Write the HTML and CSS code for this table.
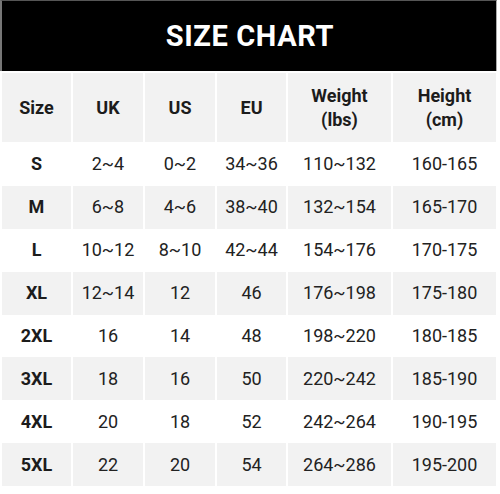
FILE: index.html
```html
<!DOCTYPE html>
<html lang="en">
<head>
<meta charset="utf-8">
<title>Size Chart</title>
<link rel="stylesheet" href="styles.css">
</head>
<body>
<div class="page">
  <header class="banner"><h1>SIZE CHART</h1></header>
  <div class="chart">
    <div class="row head">
      <div class="cell">Size</div>
      <div class="cell">UK</div>
      <div class="cell">US</div>
      <div class="cell">EU</div>
      <div class="cell">Weight<br>(lbs)</div>
      <div class="cell">Height<br>(cm)</div>
    </div>
    <div class="row">
      <div class="cell size">S</div><div class="cell">2~4</div><div class="cell">0~2</div><div class="cell">34~36</div><div class="cell">110~132</div><div class="cell">160-165</div>
    </div>
    <div class="row alt">
      <div class="cell size">M</div><div class="cell">6~8</div><div class="cell">4~6</div><div class="cell">38~40</div><div class="cell">132~154</div><div class="cell">165-170</div>
    </div>
    <div class="row">
      <div class="cell size">L</div><div class="cell">10~12</div><div class="cell">8~10</div><div class="cell">42~44</div><div class="cell">154~176</div><div class="cell">170-175</div>
    </div>
    <div class="row alt">
      <div class="cell size">XL</div><div class="cell">12~14</div><div class="cell">12</div><div class="cell">46</div><div class="cell">176~198</div><div class="cell">175-180</div>
    </div>
    <div class="row">
      <div class="cell size">2XL</div><div class="cell">16</div><div class="cell">14</div><div class="cell">48</div><div class="cell">198~220</div><div class="cell">180-185</div>
    </div>
    <div class="row alt">
      <div class="cell size">3XL</div><div class="cell">18</div><div class="cell">16</div><div class="cell">50</div><div class="cell">220~242</div><div class="cell">185-190</div>
    </div>
    <div class="row">
      <div class="cell size">4XL</div><div class="cell">20</div><div class="cell">18</div><div class="cell">52</div><div class="cell">242~264</div><div class="cell">190-195</div>
    </div>
    <div class="row alt">
      <div class="cell size">5XL</div><div class="cell">22</div><div class="cell">20</div><div class="cell">54</div><div class="cell">264~286</div><div class="cell">195-200</div>
    </div>
  </div>
</div>
</body>
</html>
```

FILE: styles.css
```css
* { box-sizing: border-box; }
html, body { margin: 0; padding: 0; background: #fff; }
body {
  font-family: Roboto, "Liberation Sans", Arial, sans-serif;
  color: #222;
  width: 500px;
  height: 494px;
  overflow: hidden;
}
.page { width: 500px; }
.banner {
  width: 497px;
  height: 71px;
  background: #000;
  border-top: 1px solid #555;
  border-left: 2px solid #777;
  border-right: 1px solid #aaa;
  display: flex;
  align-items: center;
  justify-content: center;
  margin-bottom: 2px;
}
.banner h1 {
  margin: 0;
  color: #fff;
  font-size: 29px;
  font-weight: 700;
  letter-spacing: 0.6px;
  padding-left: 2px;
}
.chart {
  margin-left: 2px;
  width: 494px;
  display: flex;
  flex-direction: column;
}
.row {
  display: grid;
  grid-template-columns: 69px 70px 70px 69px 103px 103px;
  column-gap: 2px;
  height: 42.9px;
}
.row.head { height: 69px; margin-bottom: 1px; }
.cell {
  display: flex;
  align-items: center;
  justify-content: center;
  text-align: center;
  font-size: 18px;
  line-height: 24px;
  color: #222;
}
.head .cell {
  background: #f2f2f2;
  font-weight: 700;
  color: #1c1c1c;
}
.alt .cell { background: #f2f2f2; }
.cell.size { font-weight: 700; color: #1c1c1c; }
```
